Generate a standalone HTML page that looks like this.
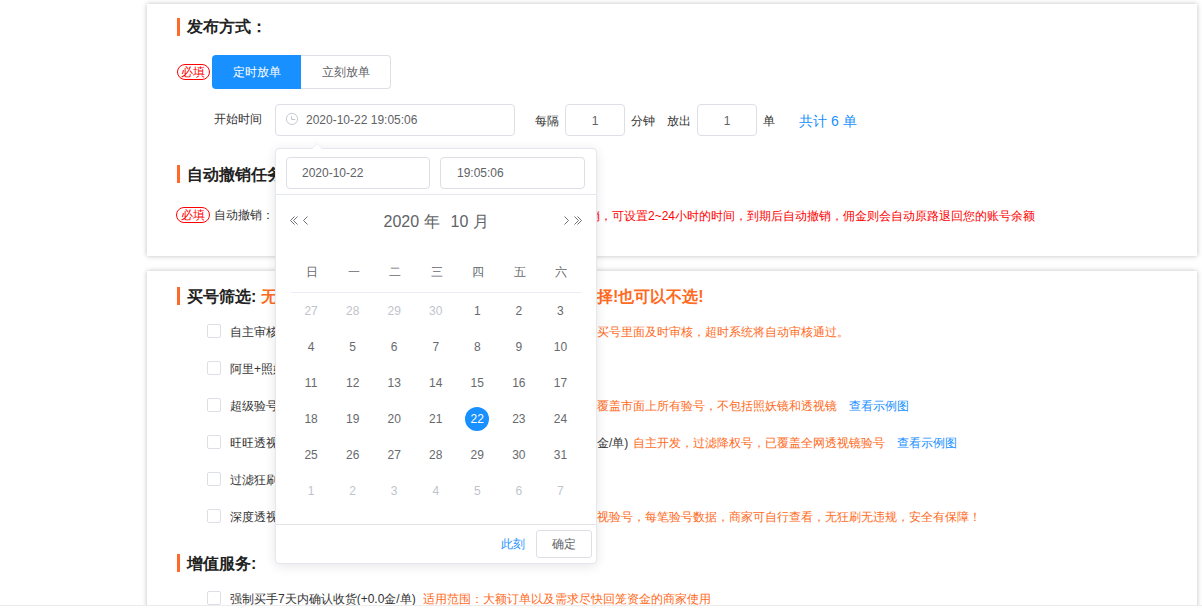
<!DOCTYPE html>
<html><head><meta charset="utf-8">
<style>
*{margin:0;padding:0;box-sizing:border-box;}
html,body{width:1202px;height:611px;overflow:hidden;background:#fff;font-family:"Liberation Sans",sans-serif;font-size:12px;color:#333;}
.abs{position:absolute;white-space:nowrap;}
.card{position:absolute;left:147px;width:1050px;background:#fff;box-shadow:0 0 5px rgba(0,0,0,0.25);}
.bar{position:absolute;width:3px;height:18px;background:#ff6a2a;}
.h{position:absolute;font-size:16px;font-weight:bold;color:#222;line-height:18px;white-space:nowrap;}
.req{position:absolute;width:33px;height:16px;border:1px solid #f00;border-radius:8px;color:#f00;font-size:12px;line-height:14px;text-align:center;padding-right:1px;}
.lbl{position:absolute;font-size:12px;color:#333;line-height:14px;white-space:nowrap;}
.inp{position:absolute;border:1px solid #dcdfe6;border-radius:4px;background:#fff;height:32px;}
.cb{position:absolute;width:14px;height:14px;border:1px solid #dcdfe6;border-radius:2px;background:#fff;}
.org{color:#ff6a22;}
.red{color:#f00;}
.blue{color:#1890ff;}
.line{position:absolute;left:0;top:605px;width:1202px;height:1px;background:#ececec;}
/* picker */
.pk{position:absolute;left:275px;top:148px;width:322px;height:416px;background:#fff;border:1px solid #e4e7ed;border-radius:4px;box-shadow:0 2px 12px 0 rgba(0,0,0,0.1);}
.dn{position:absolute;width:30px;text-align:center;font-size:12px;color:#67696e;line-height:14px;}
.dis{color:#c0c4cc;}
.arr{position:absolute;left:312px;top:138px;width:0;height:0;border:5px solid transparent;border-bottom-color:#ebeef5;}
.arr2{position:absolute;left:312px;top:139px;width:0;height:0;border:5px solid transparent;border-bottom-color:#fff;}
</style></head>
<body>
<!-- card 1 -->
<div class="card" style="top:4px;height:252px;"></div>
<div class="bar" style="left:177px;top:18px;"></div>
<div class="h" style="left:187px;top:18px;">发布方式：</div>
<div class="req" style="left:177px;top:64px;">必填</div>
<div class="abs" style="left:212px;top:55px;width:89px;height:34px;background:#1890ff;border-radius:4px 0 0 4px;color:#fff;text-align:center;line-height:34px;">定时放单</div>
<div class="abs" style="left:301px;top:55px;width:90px;height:34px;border:1px solid #dcdfe6;border-left:none;border-radius:0 4px 4px 0;color:#606266;text-align:center;line-height:32px;">立刻放单</div>

<div class="lbl" style="left:214px;top:112px;">开始时间</div>
<div class="inp" style="left:275px;top:104px;width:240px;"></div>
<svg class="abs" style="left:285px;top:112px;" width="14" height="14" viewBox="0 0 14 14"><circle cx="7" cy="6.9" r="5.6" fill="none" stroke="#c8cbd2" stroke-width="1"/><path d="M6.5 4.2V7.5H10.2" fill="none" stroke="#c0c4cc" stroke-width="1"/></svg>
<div class="lbl" style="left:306px;top:113px;color:#606266;">2020-10-22 19:05:06</div>

<div class="lbl" style="left:535px;top:113.5px;">每隔</div>
<div class="inp" style="left:565px;top:104px;width:60px;"></div>
<div class="lbl" style="left:565px;top:113.5px;width:60px;text-align:center;color:#606266;">1</div>
<div class="lbl" style="left:631px;top:113.5px;">分钟</div>
<div class="lbl" style="left:667px;top:113.5px;">放出</div>
<div class="inp" style="left:697px;top:104px;width:60px;"></div>
<div class="lbl" style="left:697px;top:113.5px;width:60px;text-align:center;color:#606266;">1</div>
<div class="lbl" style="left:763px;top:113.5px;">单</div>
<div class="lbl blue" style="left:799px;top:113.5px;font-size:14px;">共计 6 单</div>

<div class="bar" style="left:177px;top:165px;"></div>
<div class="h" style="left:187px;top:165.5px;">自动撤销任务：</div>
<div class="req" style="left:176px;top:207px;width:34px;">必填</div>
<div class="lbl" style="left:214px;top:208px;">自动撤销：</div>
<div class="lbl red" style="left:588px;top:208.5px;">销，可设置2~24小时的时间，到期后自动撤销，佣金则会自动原路退回您的账号余额</div>

<!-- card 2 -->
<div class="card" style="top:271px;height:400px;"></div>
<div class="bar" style="left:177px;top:287px;"></div>
<div class="h" style="left:187px;top:288px;">买号筛选: <span class="org">无需选择</span></div>
<div class="h org" style="left:597px;top:288px;">择!也可以不选!</div>

<div class="cb" style="left:207px;top:324px;"></div>
<div class="lbl" style="left:230px;top:325px;">自主审核(+0.0金/单)</div>
<div class="lbl org" style="left:597px;top:325px;">买号里面及时审核，超时系统将自动审核通过。</div>

<div class="cb" style="left:207px;top:361px;"></div>
<div class="lbl" style="left:230px;top:362px;">阿里+照妖镜(+0.0金/单)</div>

<div class="cb" style="left:207px;top:398px;"></div>
<div class="lbl" style="left:230px;top:399px;">超级验号(+0.0金/单)</div>
<div class="lbl org" style="left:597px;top:399px;">覆盖市面上所有验号，不包括照妖镜和透视镜</div>
<div class="lbl blue" style="left:849px;top:399px;">查看示例图</div>

<div class="cb" style="left:207px;top:435px;"></div>
<div class="lbl" style="left:230px;top:436px;">旺旺透视镜验号(+0.0金/单)</div>
<div class="lbl" style="left:597px;top:436px;">金/单)</div>
<div class="lbl org" style="left:633px;top:436px;">自主开发，过滤降权号，已覆盖全网透视镜验号</div>
<div class="lbl blue" style="left:897px;top:436px;">查看示例图</div>

<div class="cb" style="left:207px;top:472px;"></div>
<div class="lbl" style="left:230px;top:473px;">过滤狂刷(+0.0金/单)</div>

<div class="cb" style="left:207px;top:509px;"></div>
<div class="lbl" style="left:230px;top:510px;">深度透视验号(+0.0金/单)</div>
<div class="lbl org" style="left:597px;top:510px;">视验号，每笔验号数据，商家可自行查看，无狂刷无违规，安全有保障！</div>

<div class="bar" style="left:177px;top:554px;"></div>
<div class="h" style="left:187px;top:554.5px;">增值服务:</div>
<div class="cb" style="left:207px;top:591px;"></div>
<div class="lbl" style="left:230px;top:592px;">强制买手7天内确认收货(+0.0金/单)</div>
<div class="lbl org" style="left:423px;top:592px;">适用范围：大额订单以及需求尽快回笼资金的商家使用</div>
<div class="line"></div>
<div style="position:absolute;left:0;top:606px;width:1202px;height:5px;background:#fff;"></div>

<!-- picker -->
<div class="pk"></div>
<div class="arr"></div><div class="arr2"></div>
<div class="inp" style="left:286px;top:157px;width:144px;"></div>
<div class="lbl" style="left:302px;top:166px;color:#606266;">2020-10-22</div>
<div class="inp" style="left:440px;top:157px;width:145px;"></div>
<div class="lbl" style="left:457px;top:166px;color:#606266;">19:05:06</div>
<div class="abs" style="left:276px;top:194px;width:320px;height:1px;background:#e4e7ed;"></div>
<svg class="abs" style="left:284px;top:210px;" width="30" height="20" viewBox="0 0 30 20"><path d="M10.5 6.5 L6.5 10.5 L10.5 14.5 M13.5 6.5 L9.5 10.5 L13.5 14.5 M23.5 6.5 L19.5 10.5 L23.5 14.5" fill="none" stroke="#707277" stroke-width="1"/></svg>
<svg class="abs" style="left:556px;top:210px;" width="30" height="20" viewBox="0 0 30 20"><path d="M8.5 6.5 L12.5 10.5 L8.5 14.5 M18.5 6.5 L22.5 10.5 L18.5 14.5 M21.5 6.5 L25.5 10.5 L21.5 14.5" fill="none" stroke="#707277" stroke-width="1"/></svg>
<div class="abs" style="left:383.5px;top:212px;font-size:16px;line-height:20px;color:#606266;">2020 年</div><div class="abs" style="left:450.5px;top:212px;font-size:16px;line-height:20px;color:#606266;">10 月</div>
<div class="dn" style="left:292.10px;top:265.20px;width:40px;">日</div>
<div class="dn" style="left:333.65px;top:265.20px;width:40px;">一</div>
<div class="dn" style="left:375.20px;top:265.20px;width:40px;">二</div>
<div class="dn" style="left:416.75px;top:265.20px;width:40px;">三</div>
<div class="dn" style="left:458.30px;top:265.20px;width:40px;">四</div>
<div class="dn" style="left:499.85px;top:265.20px;width:40px;">五</div>
<div class="dn" style="left:541.40px;top:265.20px;width:40px;">六</div>
<div class="abs" style="left:291px;top:292px;width:291px;height:1px;background:#ebeef5;"></div>
<div class="dn dis" style="left:291.10px;top:303.60px;width:40px;">27</div>
<div class="dn dis" style="left:332.65px;top:303.60px;width:40px;">28</div>
<div class="dn dis" style="left:374.20px;top:303.60px;width:40px;">29</div>
<div class="dn dis" style="left:415.75px;top:303.60px;width:40px;">30</div>
<div class="dn " style="left:457.30px;top:303.60px;width:40px;">1</div>
<div class="dn " style="left:498.85px;top:303.60px;width:40px;">2</div>
<div class="dn " style="left:540.40px;top:303.60px;width:40px;">3</div>
<div class="dn " style="left:291.10px;top:339.65px;width:40px;">4</div>
<div class="dn " style="left:332.65px;top:339.65px;width:40px;">5</div>
<div class="dn " style="left:374.20px;top:339.65px;width:40px;">6</div>
<div class="dn " style="left:415.75px;top:339.65px;width:40px;">7</div>
<div class="dn " style="left:457.30px;top:339.65px;width:40px;">8</div>
<div class="dn " style="left:498.85px;top:339.65px;width:40px;">9</div>
<div class="dn " style="left:540.40px;top:339.65px;width:40px;">10</div>
<div class="dn " style="left:291.10px;top:375.70px;width:40px;">11</div>
<div class="dn " style="left:332.65px;top:375.70px;width:40px;">12</div>
<div class="dn " style="left:374.20px;top:375.70px;width:40px;">13</div>
<div class="dn " style="left:415.75px;top:375.70px;width:40px;">14</div>
<div class="dn " style="left:457.30px;top:375.70px;width:40px;">15</div>
<div class="dn " style="left:498.85px;top:375.70px;width:40px;">16</div>
<div class="dn " style="left:540.40px;top:375.70px;width:40px;">17</div>
<div class="dn " style="left:291.10px;top:411.75px;width:40px;">18</div>
<div class="dn " style="left:332.65px;top:411.75px;width:40px;">19</div>
<div class="dn " style="left:374.20px;top:411.75px;width:40px;">20</div>
<div class="dn " style="left:415.75px;top:411.75px;width:40px;">21</div>
<div class="abs" style="left:465px;top:407px;width:24px;height:24px;border-radius:50%;background:#1890ff;"></div>
<div class="dn" style="left:457.30px;top:411.75px;width:40px;color:#fff;">22</div>
<div class="dn " style="left:498.85px;top:411.75px;width:40px;">23</div>
<div class="dn " style="left:540.40px;top:411.75px;width:40px;">24</div>
<div class="dn " style="left:291.10px;top:447.80px;width:40px;">25</div>
<div class="dn " style="left:332.65px;top:447.80px;width:40px;">26</div>
<div class="dn " style="left:374.20px;top:447.80px;width:40px;">27</div>
<div class="dn " style="left:415.75px;top:447.80px;width:40px;">28</div>
<div class="dn " style="left:457.30px;top:447.80px;width:40px;">29</div>
<div class="dn " style="left:498.85px;top:447.80px;width:40px;">30</div>
<div class="dn " style="left:540.40px;top:447.80px;width:40px;">31</div>
<div class="dn dis" style="left:291.10px;top:483.85px;width:40px;">1</div>
<div class="dn dis" style="left:332.65px;top:483.85px;width:40px;">2</div>
<div class="dn dis" style="left:374.20px;top:483.85px;width:40px;">3</div>
<div class="dn dis" style="left:415.75px;top:483.85px;width:40px;">4</div>
<div class="dn dis" style="left:457.30px;top:483.85px;width:40px;">5</div>
<div class="dn dis" style="left:498.85px;top:483.85px;width:40px;">6</div>
<div class="dn dis" style="left:540.40px;top:483.85px;width:40px;">7</div>
<div class="abs" style="left:276px;top:524px;width:320px;height:1px;background:#e4e4e4;"></div>
<div class="lbl blue" style="left:501px;top:537px;">此刻</div>
<div class="abs" style="left:536px;top:530px;width:56px;height:28px;border:1px solid #dcdfe6;border-radius:3px;background:#fff;color:#606266;text-align:center;line-height:26px;">确定</div>
</body></html>
